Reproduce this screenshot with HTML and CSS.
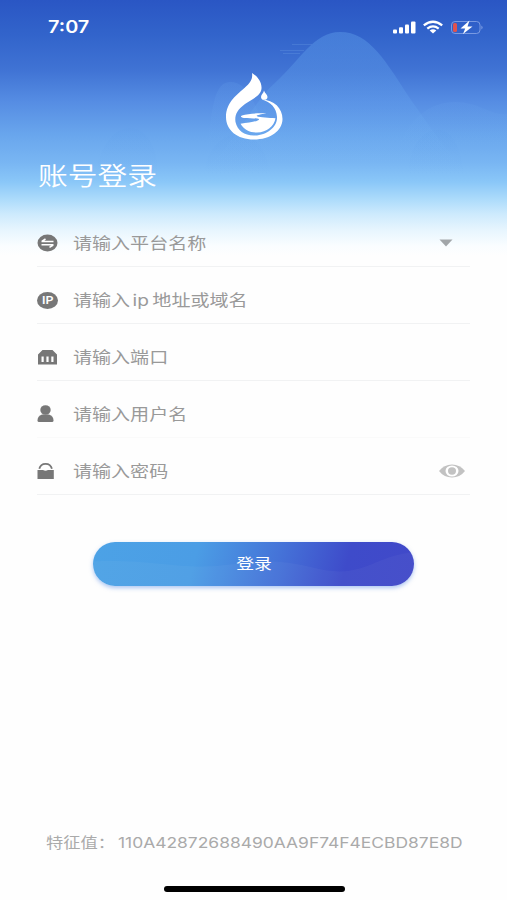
FILE: index.html
```html
<!DOCTYPE html>
<html lang="zh-CN">
<head>
<meta charset="UTF-8">
<meta name="viewport" content="width=device-width, initial-scale=1">
<title>账号登录</title>
<link rel="stylesheet" href="styles.css">
</head>
<body>
<main class="screen">
  <svg class="scenery" viewBox="0 0 507 256" aria-hidden="true">
    <defs>
      <linearGradient id="hill" x1="0" y1="30" x2="0" y2="175" gradientUnits="userSpaceOnUse">
        <stop offset="0" stop-color="#6db0f4" stop-opacity=".34"/>
        <stop offset=".5" stop-color="#6db0f4" stop-opacity=".2"/>
        <stop offset="1" stop-color="#7dbcf7" stop-opacity="0"/>
      </linearGradient>
      <linearGradient id="mound" x1="0" y1="80" x2="0" y2="150" gradientUnits="userSpaceOnUse">
        <stop offset="0" stop-color="#78b5f5" stop-opacity=".14"/>
        <stop offset="1" stop-color="#78b5f5" stop-opacity="0"/>
      </linearGradient>
      <linearGradient id="tree" x1="0" y1="125" x2="0" y2="175" gradientUnits="userSpaceOnUse">
        <stop offset="0" stop-color="#5797e8" stop-opacity=".09"/>
        <stop offset="1" stop-color="#5797e8" stop-opacity="0"/>
      </linearGradient>
    </defs>
    <path fill="url(#hill)" d="M200 175C238 140 252 103 276 82C300 60 314 32 340 32C370 32 386 62 411 100C428 124 445 150 470 175Z"/>
    <path fill="url(#mound)" d="M200 170C214 140 207 82 230 82C250 82 258 108 278 170Z"/>
    <path fill="url(#mound)" d="M390 170C405 115 432 102 455 102C480 102 490 116 507 114V170Z"/>
    <path fill="url(#tree)" d="M96 175C100 145 114 128 130 128C147 128 158 148 158 175ZM204 175C207 148 222 134 240 134C257 134 268 154 270 175ZM408 175C410 142 424 130 438 130C453 130 461 148 464 175Z"/>
    <path stroke="#7eb0ed" stroke-opacity=".22" d="M292 44.500H312M280 50.500H304M283 53.500H300"/>
  </svg>

  <header class="status">
    <span class="clock"><span class="wide">7:07</span></span>
    <svg class="indicators" viewBox="0 0 92 16" aria-hidden="true">
      <g fill="#fff">
        <rect x="1" y="10.500" width="4" height="4" rx="1"/>
        <rect x="7" y="8.200" width="4" height="6.300" rx="1"/>
        <rect x="13" y="5.500" width="4" height="9" rx="1"/>
        <rect x="19" y="2.500" width="4.500" height="12" rx="1"/>
      </g>
      <g fill="none" stroke="#fff" stroke-width="2.300">
        <path d="M31.800 6.400Q41 -1 50.200 6.400"/>
        <path d="M35.300 9.600Q41 5.200 46.700 9.600"/>
      </g>
      <path fill="#fff" d="M37.700 11.400Q41 9.200 44.300 11.400L41 14.600Z"/>
      <rect x="59.500" y="2.500" width="28.500" height="12" rx="3.500" fill="none" stroke="#91acea" stroke-opacity=".75"/>
      <path fill="#91acea" d="M89.500 6.500Q91.500 8.500 89.500 10.500Z"/>
      <rect x="61" y="4" width="4" height="9" rx="1.500" fill="#e0524f"/>
      <path fill="#fff" d="M77.500 1.500L68.500 9.500H73.200L71 15L80.500 7.500H75.500Z"/>
    </svg>
  </header>

  <svg class="logo" viewBox="0 0 60 70" aria-hidden="true">
    <g fill="#fff">
      <path d="M28 2C33 5 38 11 37.500 17.500C37 25 28 28 21 33C13 39 10.500 44 11.500 51C13.500 60 21 65 31 64.500C43 64 53.500 56 53 46C52.500 37 47 31 37.500 28.500C50 29 58.500 37 58.500 48C58.500 60 46 68.500 30 68.500C13 68.500 2 59 2 46C2 31 14 23 21 16.500C26 12 29 8 28 2Z"/>
      <path d="M40 19.500C40.500 22 43.500 23.500 43.500 26C43.500 29.800 37 29.800 37 26C37 23.500 39.800 22 40 19.500Z"/>
      <path d="M42.500 42.500C34 42 24 42.500 18 44.500C16 45.500 17 46.700 20 46.900C26 47.200 34 47.200 35 48.300C35.500 50 26 51.500 16.500 52.800C20 59 26 61.800 33 61.500C43 61 50 55.500 51.500 47.200C45 46.800 36 46.300 33 45.200C31.500 44.300 36 43.300 42.500 42.500Z"/>
    </g>
  </svg>

  <h1 class="title"><span class="wide">账号登录</span></h1>

  <form class="form">
    <div class="field">
      <svg class="icon" viewBox="0 0 20 18" aria-hidden="true"><ellipse cx="10" cy="9" rx="10" ry="8.500" fill="#777"/><path d="M4 7.600H16M4 10.700H16M4.300 7.400L8 5M15.700 11L12 13.400" fill="none" stroke="#fff" stroke-width="1.500"/></svg>
      <span class="label"><span class="wide">请输入平台名称</span></span>
      <svg class="arrow" viewBox="0 0 14 8" aria-hidden="true"><path fill="#a2a6a9" d="M.5 .5H13.500L7 7.500Z"/></svg>
    </div>
    <div class="field">
      <span class="icon ip"><span class="wide">IP</span></span>
      <span class="label"><span class="wide">请输入<span class="latin">ip</span>地址或域名</span></span>
    </div>
    <div class="field">
      <svg class="icon" viewBox="0 0 20 18" aria-hidden="true"><path fill="#777" fill-rule="evenodd" d="M.5 16.500V6.500L5 2H15L19.500 6.500V16.500ZM4 8.500V14H6.200V8.500ZM8.900 8.500V14H11.100V8.500ZM13.800 8.500V14H16V8.500Z"/></svg>
      <span class="label"><span class="wide">请输入端口</span></span>
    </div>
    <div class="field faint">
      <svg class="icon" viewBox="0 0 20 18" aria-hidden="true"><ellipse cx="8" cy="5" rx="5.200" ry="4.800" fill="#777"/><path fill="#777" d="M0 15.500Q0 11.200 4.500 9.500H11.500Q16 11.200 16 15.500Q16 17 14.500 17H1.500Q0 17 0 15.500Z"/></svg>
      <span class="label"><span class="wide">请输入用户名</span></span>
    </div>
    <div class="field">
      <svg class="icon" viewBox="0 0 20 18" aria-hidden="true"><path fill="#777" d="M0 8H5.500Q8 9.300 10.500 8H16.300V17H0Z"/><path fill="none" stroke="#777" stroke-width="1.800" d="M1.800 6.800Q3 1.800 8.100 1.800T14.400 6.800"/></svg>
      <span class="label"><span class="wide">请输入密码</span></span>
      <svg class="eye" viewBox="0 0 26 14" aria-hidden="true"><path fill="#c2c2c2" d="M0 7Q5 .5 13 .5T26 7Q21 13.500 13 13.500T0 7Z"/><ellipse cx="13" cy="7" rx="6.500" ry="5.500" fill="#fff"/><ellipse cx="13" cy="7" rx="4" ry="3.700" fill="#c2c2c2"/></svg>
    </div>
    <button class="submit" type="button">
      <svg class="waves" viewBox="0 0 321 43" preserveAspectRatio="none" aria-hidden="true"><path fill="#fff" fill-opacity=".035" d="M0 19C50 17 75 24 110 24S170 12 220 25S280 13 321 10V43H0Z"/></svg>
      <span class="caption"><span class="wide">登录</span></span>
    </button>
  </form>

  <footer class="footer">
    <p class="device"><span class="device-name"><span class="wide">特征值：</span></span><span class="device-code"><span class="wide">110A42872688490AA9F74F4ECBD87E8D</span></span></p>
    <div class="home-bar"></div>
  </footer>
</main>
</body>
</html>
```
FILE: styles.css
```css
* {
  box-sizing: border-box;
}

body {
  margin: 0;
  background: #fefefe;
  font-family: Inter, "Noto Sans CJK SC", sans-serif;
}

.screen {
  position: relative;
  display: flex;
  flex-direction: column;
  height: 900px;
  overflow: hidden;
  background: linear-gradient(#2a56c4 0, #3264cb 35px, #4073d4 70px, #568de3 102px, #69a6ed 135px, #79b6f3 163px, #8ac7f8 182px, #aedcfb 200px, #cdeafd 214px, #e7f5fe 230px, #fafdff 246px, #fefefe 256px);
}

.scenery {
  position: absolute;
  top: 0;
  left: 0;
  width: 507px;
  height: 256px;
}

.status,
.logo,
.title,
.form,
.footer {
  position: relative;
}

.wide {
  display: inline-block;
  white-space: pre;
  transform: scaleX(1.19);
  transform-origin: left center;
}

.status {
  display: flex;
  align-items: center;
  justify-content: space-between;
  height: 54px;
  padding: 0 23px 0 48px;
  color: #fff;
}

.clock {
  font-size: 17px;
  font-weight: 600;
}

.clock .wide {
  transform: scaleX(1.17);
}

.indicators {
  width: 92px;
  height: 16px;
}

.logo {
  width: 60px;
  height: 70px;
  margin: 17px 0 0 224px;
}

.title {
  height: 36px;
  margin: 17px 0 0 38px;
  color: #fff;
  font-size: 25px;
  font-weight: 350;
  line-height: 36px;
}

.form {
  margin: 16px 37px 0;
}

.field {
  display: flex;
  align-items: center;
  height: 57px;
  padding-top: 10px;
  border-bottom: 1px solid #f1f2f3;
}

.field.faint {
  border-color: #fafafa;
}

.icon {
  flex: none;
  width: 21px;
  height: 18px;
}

.ip {
  display: flex;
  align-items: center;
  justify-content: center;
  height: 17px;
  border-radius: 50%;
  background: #777;
  color: #fff;
  font-size: 10.500px;
  font-weight: 600;
}

.ip .wide {
  transform-origin: center;
}

.label {
  flex: 1;
  margin-left: 15px;
  color: #999;
  font-size: 16px;
  line-height: 24px;
}

.latin {
  margin: 0 3px 0 2px;
}

.arrow {
  width: 14px;
  height: 8px;
  margin-right: 17px;
}

.eye {
  width: 26px;
  height: 14px;
  margin-right: 5px;
}

.submit {
  position: relative;
  display: block;
  width: 321px;
  height: 44px;
  margin: 47px auto 0;
  padding: 0;
  overflow: hidden;
  border: 0;
  border-radius: 22px;
  background: linear-gradient(105deg, #4ca2e6 0, #4b9de5 32%, #4573d8 57%, #3e4bca 78%, #4149c9 100%);
  box-shadow: 0 2px 4px rgba(91, 144, 232, 0.5);
  color: #fff;
  font: 400 15px/44px Inter, "Noto Sans CJK SC", sans-serif;
}

.waves {
  position: absolute;
  inset: 0;
  width: 100%;
  height: 100%;
}

.caption {
  position: relative;
  left: 1px;
}

.caption .wide {
  transform-origin: center;
}

.footer {
  margin-top: auto;
}

.device {
  display: flex;
  margin: 0 0 31px 46px;
  color: #aaa;
  font-size: 14.500px;
  line-height: 24px;
}

.device-name {
  width: 72px;
}

.device-code .wide {
  transform: scaleX(1.202);
}

.home-bar {
  width: 181px;
  height: 6px;
  margin: 0 0 8px 164px;
  border-radius: 3px;
  background: #000;
}
```
